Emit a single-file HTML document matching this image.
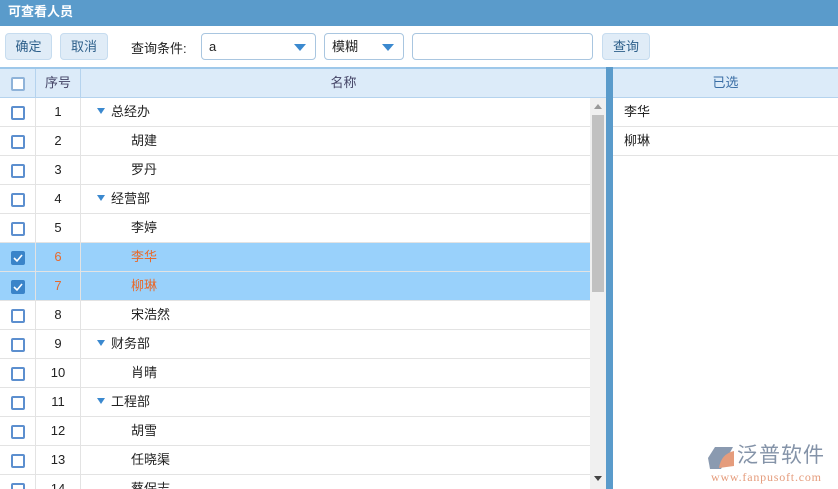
<!DOCTYPE html>
<html><head><meta charset="utf-8"><style>
*{box-sizing:border-box;margin:0;padding:0}
body{width:838px;height:489px;overflow:hidden;background:#fff;font-family:"Liberation Sans","Noto Sans CJK SC",sans-serif;font-size:13px;color:#222;position:relative}
.title{position:absolute;left:0;top:0;width:838px;height:26px;background:#5a9bcb;color:#fff;font-weight:bold;font-size:13px;padding:1px 8px}
.bar{position:absolute;left:0;top:26px;width:838px;height:41px;background:#fff}
.btn{position:absolute;top:7px;height:27px;background:#e0ecf7;border:1px solid #c6dcef;border-radius:4px;color:#2d5f8a;text-align:center;line-height:25px}
.sel{position:absolute;top:7px;height:27px;border:1px solid #a9c6e0;border-radius:4px;background:#fff;padding-left:7px;line-height:25px}
.arr{position:absolute;right:9px;top:10px;width:0;height:0;border-left:6px solid transparent;border-right:6px solid transparent;border-top:7px solid #3b89cf}
.grid{position:absolute;left:0;top:67px;width:606px;height:422px;overflow:hidden;border-top:2px solid #9ec8ea}
.hdr{position:absolute;left:0;top:0;width:606px;height:29px;background:#dcebf9;border-bottom:1px solid #b5d3ee;color:#446;}
.row{position:absolute;left:0;width:590px;height:29px;border-bottom:1px solid #e3e3e3;background:#fff}
.row.s{background:#99d1fb;color:#e8692b}
.c{position:absolute;top:0;height:29px;line-height:28px;border-right:1px solid #e3e3e3}
.cb{position:absolute;left:11px;top:8px;width:14px;height:14px;border:2px solid #5c8fcf;border-radius:2px;background:#fff}
.cb.on{background:#3a84c9;border-color:#3a84c9}
.tri{display:inline-block;width:0;height:0;border-left:4px solid transparent;border-right:4px solid transparent;border-top:6px solid #3b89cf;margin-right:6px;vertical-align:2px}
.sb{position:absolute;left:590px;top:29px;width:16px;height:393px;background:#f0f0f0}
.split{position:absolute;left:606px;top:67px;width:7px;height:422px;background:#5a9bcb}
.right{position:absolute;left:613px;top:67px;width:225px;height:422px;border-top:2px solid #9ec8ea}
</style></head><body>
<div class="title">可查看人员</div>
<div class="bar">
 <div class="btn" style="left:5px;width:47px">确定</div>
 <div class="btn" style="left:60px;width:48px">取消</div>
 <div style="position:absolute;left:131px;top:12px">查询条件:</div>
 <div class="sel" style="left:201px;width:115px">a<span class="arr"></span></div>
 <div class="sel" style="left:324px;width:80px">模糊<span class="arr"></span></div>
 <div class="sel" style="left:412px;width:181px"></div>
 <div class="btn" style="left:602px;width:48px">查询</div>
</div>
<div class="grid">
 <div class="hdr">
  <div class="c" style="left:0;width:36px;border-color:#b5d3ee"><span class="cb" style="border-color:#8fb3d9"></span></div>
  <div class="c" style="left:36px;width:45px;text-align:center;border-color:#b5d3ee">序号</div>
  <div class="c" style="left:81px;width:525px;text-align:center;border:none">名称</div>
 </div>
 <div id="rows"></div>
 <div class="sb">
  <div style="position:absolute;left:4px;top:6px;border-left:4px solid transparent;border-right:4px solid transparent;border-bottom:5px solid #999"></div>
  <div style="position:absolute;left:2px;top:17px;width:12px;height:177px;background:#c1c1c1"></div>
  <div style="position:absolute;left:4px;top:378px;border-left:4px solid transparent;border-right:4px solid transparent;border-top:5px solid #444"></div>
 </div>
</div>
<div class="split"></div>
<div class="right">
 <div style="height:29px;background:#dcebf9;border-bottom:1px solid #b5d3ee;text-align:center;line-height:28px;color:#3a6ea5">已选</div>
 <div style="height:29px;border-bottom:1px solid #e3e3e3;line-height:28px;padding-left:11px">李华</div>
 <div style="height:29px;border-bottom:1px solid #e3e3e3;line-height:28px;padding-left:11px">柳琳</div>
 <div style="position:absolute;left:95px;top:376px;width:125px">
  <svg width="28" height="24" style="position:absolute;left:0;top:1px"><polygon points="7,1 25,1 13,23 2,23 0,12" fill="#8a9ab0"/><path d="M11,22 Q13,8 26,5 L26,20 Z" fill="#e59c7c"/></svg>
  <div style="position:absolute;left:29px;top:-1px;font-size:21px;line-height:24px;color:#8493a8;letter-spacing:1px;white-space:nowrap">泛普软件</div>
  <div style="position:absolute;left:3px;top:25px;font-family:'Liberation Serif',serif;font-size:12px;letter-spacing:0.8px;color:#e59c7c;white-space:nowrap">www.fanpusoft.com</div>
 </div>
</div>
<script>
var d=[["1","总经办",1],["2","胡建"],["3","罗丹"],["4","经营部",1],["5","李婷"],["6","李华",0,1],["7","柳琳",0,1],["8","宋浩然"],["9","财务部",1],["10","肖晴"],["11","工程部",1],["12","胡雪"],["13","任晓渠"],["14","蔡保志"]];
var h="";d.forEach(function(r,i){h+='<div class="row'+(r[3]?' s':'')+'" style="top:'+(29+29*i)+'px"><div class="c" style="left:0;width:36px"><span class="cb'+(r[3]?' on':'')+'">'+(r[3]?'<svg width="10" height="10" style="position:absolute;left:0;top:0"><path d="M1,5 L4,8 L9,2" stroke="#fff" stroke-width="1.6" fill="none"/></svg>':'')+'</span></div><div class="c" style="left:36px;width:45px;text-align:center">'+r[0]+'</div><div class="c" style="left:81px;width:509px;border:none;padding-left:'+(r[2]?16:50)+'px">'+(r[2]?'<span class="tri"></span>':'')+r[1]+'</div></div>'});
document.getElementById("rows").innerHTML=h;
</script>
</body></html>
